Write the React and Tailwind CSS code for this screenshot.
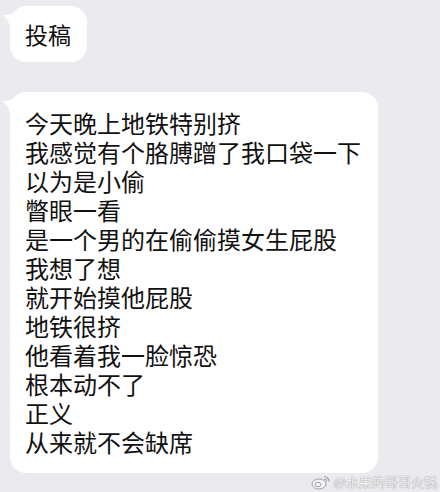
import React from 'react';

const lines = [
  '今天晚上地铁特别挤',
  '我感觉有个胳膊蹭了我口袋一下',
  '以为是小偷',
  '瞥眼一看',
  '是一个男的在偷偷摸女生屁股',
  '我想了想',
  '就开始摸他屁股',
  '地铁很挤',
  '他看着我一脸惊恐',
  '根本动不了',
  '正义',
  '从来就不会缺席',
];

function Tail() {
  return (
    <svg className="absolute left-[-9px] top-0" width="24" height="28" viewBox="0 0 24 28">
      <path d="M1 9 Q9 9.5 16 5 L24 5 L24 28 L9 28 L9 22 Q8 13 1 9 Z" fill="#ffffff" />
    </svg>
  );
}

function Bubble({ children, className }) {
  return (
    <div className={`relative bg-white rounded-[16px] ${className}`}>
      <Tail />
      <div className="relative">{children}</div>
    </div>
  );
}

export default function App() {
  return (
    <div
      className="w-[440px] h-[492px] bg-[#ebebef] overflow-hidden relative text-[#111111]"
      style={{ fontFamily: '"Noto Sans CJK SC", "Noto Sans", sans-serif' }}
    >
      <div className="flex flex-col items-start pl-[10px] pt-[6px] gap-[30px]">
        <Bubble className="w-[77px] h-[56px] flex items-center pl-[15px]">
          <span className="text-[23px] leading-[28px]">投稿</span>
        </Bubble>
        <Bubble className="w-[368px] pl-[15px] pt-[16px] pb-[17px]">
          {lines.map((l, i) => (
            <div key={i} className="text-[24px] leading-[29px] whitespace-nowrap">{l}</div>
          ))}
        </Bubble>
      </div>

      {/* watermark */}
      <div className="absolute right-[3px] bottom-[2px] flex items-center gap-[3px] text-[#f4f4f6] text-[13px] leading-[16px] [text-shadow:0_0_1px_#9a9a9a,0_0_1px_#9a9a9a]">
        <svg width="20" height="16" viewBox="0 0 20 16">
          <ellipse cx="8" cy="10" rx="7" ry="5" fill="#f4f4f6" stroke="#a0a0a0" strokeWidth="1" />
          <ellipse cx="7" cy="10.5" rx="3" ry="2.2" fill="none" stroke="#a0a0a0" strokeWidth="1" />
          <path d="M13 2.5 A5 5 0 0 1 18 7.5" fill="none" stroke="#a0a0a0" strokeWidth="1.2" />
          <path d="M13 5 A2.5 2.5 0 0 1 15.5 7.5" fill="none" stroke="#a0a0a0" strokeWidth="1.2" />
        </svg>
        <span>@水果的哥哥火锅</span>
      </div>
    </div>
  );
}
